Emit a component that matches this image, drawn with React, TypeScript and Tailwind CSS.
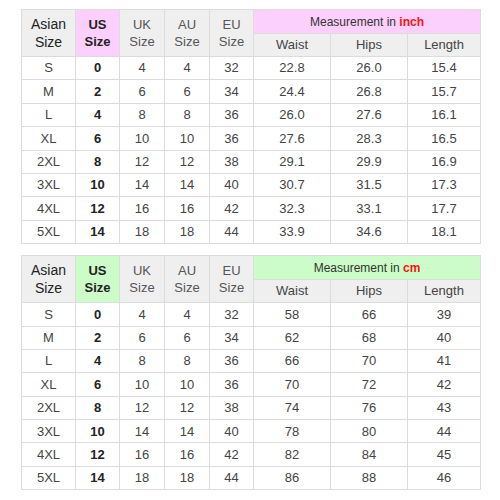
const rows = [
  ["S", "0", "4", "4", "32"],
  ["M", "2", "6", "6", "34"],
  ["L", "4", "8", "8", "36"],
  ["XL", "6", "10", "10", "36"],
  ["2XL", "8", "12", "12", "38"],
  ["3XL", "10", "14", "14", "40"],
  ["4XL", "12", "16", "16", "42"],
  ["5XL", "14", "18", "18", "44"],
];

const inch = [
  ["22.8", "26.0", "15.4"],
  ["24.4", "26.8", "15.7"],
  ["26.0", "27.6", "16.1"],
  ["27.6", "28.3", "16.5"],
  ["29.1", "29.9", "16.9"],
  ["30.7", "31.5", "17.3"],
  ["32.3", "33.1", "17.7"],
  ["33.9", "34.6", "18.1"],
];

const cm = [
  ["58", "66", "39"],
  ["62", "68", "40"],
  ["66", "70", "41"],
  ["70", "72", "42"],
  ["74", "76", "43"],
  ["78", "80", "44"],
  ["82", "84", "45"],
  ["86", "88", "46"],
];

const cell = "border border-[#dcdcdc] text-center align-middle p-0";

function SizeTable({ unit, accent, values }: { unit: string; accent: string; values: string[][] }) {
  return (
    <table className="table-fixed border-collapse w-[459px] text-[#333]">
      <colgroup>
        <col className="w-[54px]" />
        <col className="w-[44px]" />
        <col className="w-[45px]" />
        <col className="w-[45px]" />
        <col className="w-[44px]" />
        <col className="w-[77px]" />
        <col className="w-[77px]" />
        <col className="w-[73px]" />
      </colgroup>
      <thead>
        <tr className="h-[24px]">
          <th rowSpan={2} className={`${cell} bg-[#efefef] font-normal text-[14px] leading-[18px] text-[#222]`}>Asian<br />Size</th>
          <th rowSpan={2} className={`${cell} font-bold text-[13px] leading-[17px] text-[#222]`} style={{ backgroundColor: accent }}>US<br />Size</th>
          <th rowSpan={2} className={`${cell} bg-[#efefef] font-normal text-[13px] leading-[17px] text-[#555]`}>UK<br />Size</th>
          <th rowSpan={2} className={`${cell} bg-[#efefef] font-normal text-[13px] leading-[17px] text-[#555]`}>AU<br />Size</th>
          <th rowSpan={2} className={`${cell} bg-[#efefef] font-normal text-[13px] leading-[17px] text-[#555]`}>EU<br />Size</th>
          <th colSpan={3} className={`${cell} font-normal text-[12px] text-[#333]`} style={{ backgroundColor: accent }}>
            Measurement in <span className="font-bold text-[#ff1010]">{unit}</span>
          </th>
        </tr>
        <tr className="h-[23px]">
          <th className={`${cell} bg-[#efefef] font-normal text-[13px] text-[#444]`}>Waist</th>
          <th className={`${cell} bg-[#efefef] font-normal text-[13px] text-[#444]`}>Hips</th>
          <th className={`${cell} bg-[#efefef] font-normal text-[13px] text-[#444]`}>Length</th>
        </tr>
      </thead>
      <tbody>
        {rows.map((r, i) => (
          <tr key={r[0]} className="h-[23.4px] text-[13px]">
            <td className={`${cell} text-[#444]`}>{r[0]}</td>
            <td className={`${cell} font-bold text-[#222]`}>{r[1]}</td>
            <td className={`${cell} text-[#444]`}>{r[2]}</td>
            <td className={`${cell} text-[#444]`}>{r[3]}</td>
            <td className={`${cell} text-[#444]`}>{r[4]}</td>
            {values[i].map((v, j) => (
              <td key={j} className={`${cell} text-[#444]`}>{v}</td>
            ))}
          </tr>
        ))}
      </tbody>
    </table>
  );
}

export default function App() {
  return (
    <div className="w-[500px] h-[500px] bg-white pl-[21px] pt-[9px] flex flex-col gap-[11px]" style={{ fontFamily: '"Liberation Sans", Arial, sans-serif' }}>
      <SizeTable unit="inch" accent="#fcd0fc" values={inch} />
      <SizeTable unit="cm" accent="#ccfcc8" values={cm} />
    </div>
  );
}
